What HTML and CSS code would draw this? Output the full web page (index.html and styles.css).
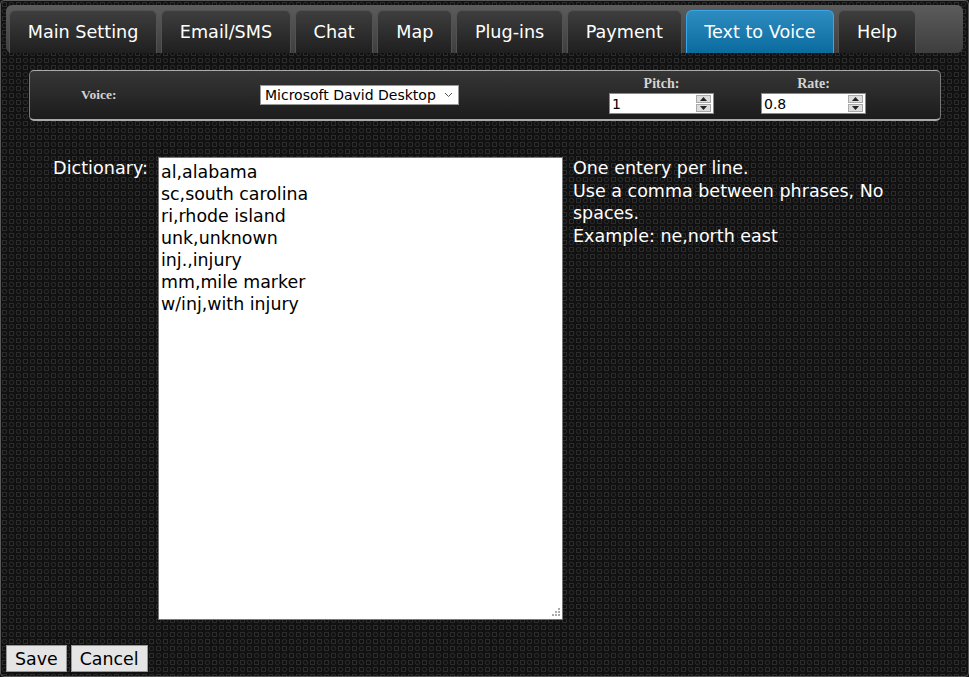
FILE: index.html
```html
<!DOCTYPE html>
<html>
<head>
<meta charset="utf-8">
<link rel="stylesheet" href="styles.css">
</head>
<body>
<div class="frame">
  <div class="tabbar">
    <div class="tab">Main Setting</div>
    <div class="tab">Email/SMS</div>
    <div class="tab">Chat</div>
    <div class="tab">Map</div>
    <div class="tab">Plug-ins</div>
    <div class="tab">Payment</div>
    <div class="tab active">Text to Voice</div>
    <div class="tab">Help</div>
  </div>

  <div class="voicebar">
    <div class="vlabel">Voice:</div>
    <select class="vselect"><option>Microsoft David Desktop</option></select>
    <div class="numgroup pitch">
      <div class="nlabel">Pitch:</div>
      <div class="numbox">
        <input class="numinput" type="text" value="1">
        <div class="spin">
          <div class="spinbtn"><svg width="7" height="4" viewBox="0 0 7 4"><path d="M3.5 0L7 4H0z" fill="#222"/></svg></div>
          <div class="spinbtn"><svg width="7" height="4" viewBox="0 0 7 4"><path d="M0 0H7L3.5 4z" fill="#222"/></svg></div>
        </div>
      </div>
    </div>
    <div class="numgroup rate">
      <div class="nlabel">Rate:</div>
      <div class="numbox">
        <input class="numinput" type="text" value="0.8">
        <div class="spin">
          <div class="spinbtn"><svg width="7" height="4" viewBox="0 0 7 4"><path d="M3.5 0L7 4H0z" fill="#222"/></svg></div>
          <div class="spinbtn"><svg width="7" height="4" viewBox="0 0 7 4"><path d="M0 0H7L3.5 4z" fill="#222"/></svg></div>
        </div>
      </div>
    </div>
  </div>

  <div class="dictrow">
    <div class="dlabel">Dictionary:</div>
    <div class="dictwrap">
      <textarea class="dict">al,alabama
sc,south carolina
ri,rhode island
unk,unknown
inj.,injury
mm,mile marker
w/inj,with injury</textarea>
      <svg class="grip" width="9" height="9" viewBox="0 0 9 9"><g fill="#aaa"><rect x="6" y="0" width="2" height="2"/><rect x="3" y="3" width="2" height="2"/><rect x="6" y="3" width="2" height="2"/><rect x="0" y="6" width="2" height="2"/><rect x="3" y="6" width="2" height="2"/><rect x="6" y="6" width="2" height="2"/></g></svg>
    </div>
    <div class="help">One entery per line.<br>Use a comma between phrases, No spaces.<br>Example: ne,north east</div>
  </div>

  <div class="buttons">
    <button class="btn">Save</button>
    <button class="btn">Cancel</button>
  </div>
</div>
</body>
</html>
```

FILE: styles.css
```css
html, body {
  margin: 0;
  padding: 0;
  background: #111;
}
.frame {
  box-sizing: border-box;
  width: 969px;
  height: 677px;
  border: 1px solid #5a5a5a;
  border-radius: 4px;
  background-color: #111;
  background-image: url("data:image/svg+xml,%3Csvg xmlns='http://www.w3.org/2000/svg' width='14' height='14'%3E%3Crect x='1.5' y='1.5' width='4' height='4' fill='none' stroke='%232c2c2c'/%3E%3Ccircle cx='10.5' cy='3.5' r='2.2' fill='none' stroke='%232c2c2c'/%3E%3Ccircle cx='3.5' cy='10.5' r='2.2' fill='none' stroke='%232c2c2c'/%3E%3Crect x='8.5' y='8.5' width='4' height='4' fill='none' stroke='%232c2c2c'/%3E%3C/svg%3E");
  font-family: "DejaVu Sans", Verdana, sans-serif;
  color: #fff;
  display: flex;
  flex-direction: column;
}
.tabbar {
  margin: 4px 5px 0 5px;
  padding: 5px 3px 0 3px;
  height: 48px;
  box-sizing: border-box;
  display: flex;
  gap: 4px;
  border-radius: 6px;
  background: linear-gradient(#5c5c5c, #3e3e3e);
}
.tab {
  box-sizing: border-box;
  height: 43px;
  padding: 0 17.75px;
  display: flex;
  align-items: center;
  font-size: 17.6px;
  color: #fff;
  border: 1px solid #525252;
  border-bottom: none;
  border-radius: 6px 6px 0 0;
  background: linear-gradient(#3e3e3e, #1f1f1f);
}
.tab.active {
  border-color: #3aa8e8;
  background: linear-gradient(#2e8cc0, #0a6b9e);
}
.voicebar {
  margin: 17px 27px 0 28px;
  height: 51px;
  box-sizing: border-box;
  border-radius: 5px;
  border-top: 1px solid #aaa;
  border-bottom: 2px solid #aaa;
  border-left: 1px solid #777;
  border-right: 1px solid #777;
  background: linear-gradient(#363636, #1c1c1c);
  display: flex;
  align-items: center;
  padding-left: 51px;
}
.vlabel {
  width: 179px;
  font-family: "Liberation Serif", serif;
  font-weight: bold;
  font-size: 13.5px;
  color: #d4d4d4;
}
.vselect {
  appearance: none;
  width: 199px;
  height: 20px;
  box-sizing: border-box;
  border: 1px solid #999;
  border-radius: 0;
  background: #fff url("data:image/svg+xml,%3Csvg xmlns='http://www.w3.org/2000/svg' width='9' height='6'%3E%3Cpath d='M1 1l3.5 3.5L8 1' fill='none' stroke='%23555' stroke-width='1'/%3E%3C/svg%3E") no-repeat right 5px center;
  font-family: "DejaVu Sans", Verdana, sans-serif;
  font-size: 14px;
  color: #000;
  padding: 0 0 0 4px;
}
.numgroup {
  width: 105px;
  display: flex;
  flex-direction: column;
  align-items: center;
  margin-top: 1px;
}
.pitch { margin-left: 150px; }
.rate { margin-left: 47px; }
.nlabel {
  font-family: "Liberation Serif", serif;
  font-weight: bold;
  font-size: 14px;
  color: #d4d4d4;
  line-height: 14px;
  margin-bottom: 2px;
}
.numbox {
  box-sizing: border-box;
  width: 105px;
  height: 21px;
  background: #fff;
  border: 1px solid #888;
  display: flex;
  align-items: center;
}
.numinput {
  flex: 1;
  min-width: 0;
  border: none;
  outline: none;
  padding: 0 0 0 2px;
  font-family: "DejaVu Sans", Verdana, sans-serif;
  font-size: 14px;
  color: #000;
  background: transparent;
}
.spin {
  width: 15px;
  height: 17px;
  margin-right: 2px;
  display: flex;
  flex-direction: column;
  gap: 1px;
}
.spinbtn {
  flex: 1;
  background: #ddd;
  border: 1px solid #aaa;
  display: flex;
  align-items: center;
  justify-content: center;
}
.dictrow {
  display: flex;
  align-items: flex-start;
  margin-top: 36px;
}
.dlabel {
  width: 147px;
  text-align: right;
  font-size: 17.6px;
  padding-top: 1px;
  margin-right: 10px;
}
.dictwrap {
  position: relative;
  width: 405px;
  height: 463px;
}
.dict {
  box-sizing: border-box;
  width: 405px;
  height: 463px;
  border: 1px solid #777;
  border-radius: 0;
  padding: 3px 2px;
  margin: 0;
  display: block;
  font-family: "DejaVu Sans", Verdana, sans-serif;
  font-size: 17.4px;
  line-height: 22px;
  color: #000;
  background: #fff;
  resize: none;
}
.grip {
  position: absolute;
  right: 2px;
  bottom: 3px;
}
.help {
  width: 330px;
  margin-left: 10px;
  padding-top: 0;
  font-size: 17.5px;
  line-height: 22.5px;
}
.buttons {
  margin: 25px 0 0 5px;
  display: flex;
  gap: 4px;
}
.btn {
  height: 27px;
  box-sizing: border-box;
  border: 1px solid #999;
  border-radius: 0;
  background: #e5e5e5;
  font-family: "DejaVu Sans", Verdana, sans-serif;
  font-size: 17.4px;
  color: #000;
  padding: 0 8px;
}
```
